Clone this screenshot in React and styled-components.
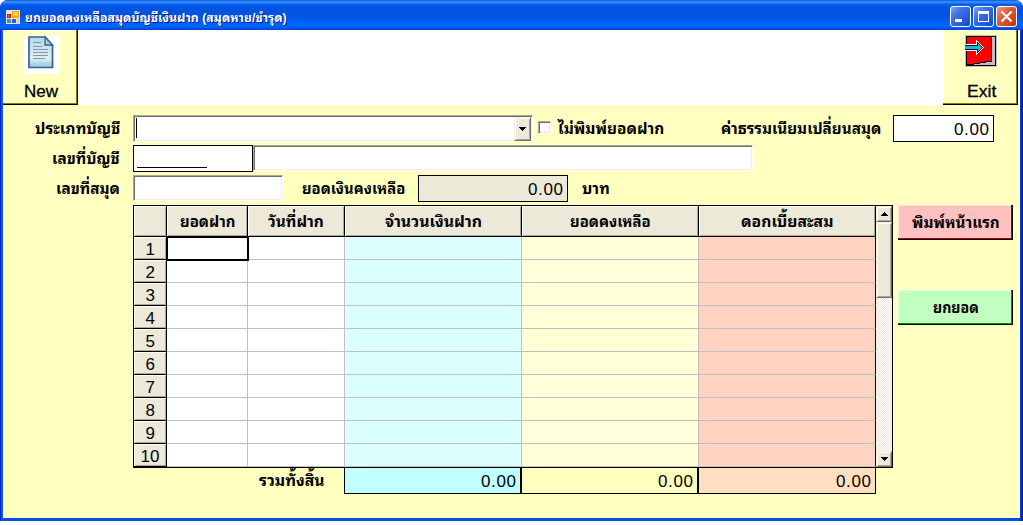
import React, { useLayoutEffect, useRef } from "react";
import styled, { createGlobalStyle } from "styled-components";

const Global = createGlobalStyle`
  *, *::before, *::after { box-sizing: border-box; }
  body {
    margin: 0;
    background: #fff;
    color: #000;
    font-family: "Liberation Sans", "Noto Sans Thai Looped", "Noto Looped Thai", "Loma", "Waree", "Garuda", "Tlwg Typist", "Noto Sans Thai", sans-serif;
    font-size: 16px;
    overflow: hidden;
  }
`;

const Window = styled.div`
  width: 1023px;
  height: 521px;
  display: flex;
  flex-direction: column;
  background: linear-gradient(90deg, #0019cf 0, #0831d9 1px, #166aee 2px, #0855dd 3px, #0855dd 1020px, #0046e0 1020px, #0030c8 1021px, #00138c 1023px);
  border-radius: 8px 8px 0 0;
  overflow: hidden;
`;

const TitleBar = styled.header`
  height: 30px;
  flex: none;
  display: flex;
  align-items: center;
  padding: 3px 6px 0 6px;
  gap: 5px;
  color: #fff;
  background: linear-gradient(180deg, #0a55d8 0, #3d95ff 2px, #0b62ee 4px, #0054e3 7px, #0053e1 15px, #0062fa 23px, #0066ff 26px, #005be8 28px, #003dd0 30px);
`;

const TitleText = styled.div`
  flex: 1;
  text-shadow: 1px 1px 0 #0a1883;
`;

const CaptionButtons = styled.div`
  display: flex;
  gap: 2px;
`;

const CaptionButton = styled.div`
  width: 21px;
  height: 21px;
  border: 1px solid #fff;
  border-radius: 3px;
  background: ${(p) =>
    p.$close
      ? "linear-gradient(135deg, #f0a088 0, #e4613c 35%, #d8411b 75%, #b8320f 100%)"
      : "linear-gradient(135deg, #7fa6f4 0, #3c6fe8 35%, #2458dd 75%, #1a45bd 100%)"};
  svg { display: block; }
`;

const Client = styled.main`
  flex: 1;
  margin: 0 3px 3px 3px;
  background: #ffffc0;
  box-shadow: 0 1px 0 #0046f0;
`;

const Toolbar = styled.div`
  height: 75px;
  width: 1017px;
  display: flex;
  justify-content: space-between;
  background: #fff;
  padding-right: 2px;
`;

const ToolButton = styled.div`
  width: 75px;
  height: 75px;
  display: flex;
  flex-direction: column;
  align-items: center;
  padding: 5px 0 0 2px;
  background: #ffffc0;
  border-right: 1px solid #000;
  border-bottom: 1px solid #000;
  box-shadow: inset -1px -1px 0 #808000, inset 1px 1px 0 #ffffe0;
  -webkit-text-stroke: 0.3px #000;
`;

const ToolIcon = styled.div`
  height: 45px;
  display: flex;
  align-items: flex-start;
`;

const Form = styled.section`
  padding-top: 10px;
  display: flex;
  flex-direction: column;
  gap: 3px;
`;

const FormRow = styled.div`
  height: 27px;
  display: flex;
`;

const Label = styled.label`
  width: ${(p) => p.$w}px;
  height: 27px;
  flex: none;
  display: flex;
  align-items: center;
  justify-content: ${(p) => (p.$left ? "flex-start" : "flex-end")};
  padding: 0 ${(p) => p.$pr || 0}px 0 ${(p) => p.$pl || 0}px;
`;

const Sunken = styled.div`
  width: ${(p) => p.$w}px;
  height: ${(p) => p.$h || 27}px;
  flex: none;
  display: flex;
  background: #fff;
  border: 1px solid;
  border-color: #aca899 #fff #fff #aca899;
  box-shadow: inset 1px 1px 0 #716f64, inset -1px -1px 0 #f1efe2;
`;

const Caret = styled.div`
  width: 1px;
  height: 20px;
  margin: 2px auto 0 2px;
  background: #000;
`;

const raised = `
  background: #ece9d8;
  border: 1px solid;
  border-color: #f1efe2 #716f64 #716f64 #f1efe2;
  box-shadow: inset 1px 1px 0 #fff, inset -1px -1px 0 #aca899;
`;

const DropButton = styled.div`
  ${raised}
  width: 17px;
  height: 24px;
  margin: 1px 1px 0 0;
  display: flex;
  align-items: center;
  justify-content: center;
`;

const Boxed = styled.div`
  width: ${(p) => p.$w}px;
  height: 27px;
  flex: none;
  display: flex;
  align-items: center;
  justify-content: flex-end;
  padding: 2px 3px 0 3px;
  border: 1px solid #000;
  background: ${(p) => p.$bg || "#fff"};
`;

const MaskLine = styled.div`
  width: 70px;
  height: 1px;
  background: #000;
  margin: 16px auto 0 0;
`;

const CheckBox = styled.div`
  width: 13px;
  height: 13px;
  margin: 6px 0 0 5px;
  background: #fff;
  border: 1px solid;
  border-color: #aca899 #fff #fff #aca899;
  box-shadow: inset 1px 1px 0 #716f64, inset -1px -1px 0 #ece9d8;
`;

const Lower = styled.section`
  display: flex;
  padding: 3px 0 0 130px;
`;

const GridFrame = styled.div`
  width: 760px;
  height: 263px;
  display: flex;
  border: 1px solid #000;
`;

const Sheet = styled.div`
  width: 742px;
  height: 261px;
  flex: none;
  display: grid;
  grid-template-columns: 33px 81px 97px 177px 177px 177px;
  grid-template-rows: 31px repeat(10, 23px);
`;

const HeadCell = styled.div`
  display: flex;
  align-items: center;
  justify-content: center;
  padding-top: ${(p) => (p.$row ? 3 : 2)}px;
  background: #ece9d8;
  border-right: 1px solid #000;
  border-bottom: 1px solid #000;
  box-shadow: inset 1px 1px 0 #fff, inset -1px -1px 0 #aca899;
`;

const Cell = styled.div`
  background: ${(p) => p.$bg};
  border-right: 1px solid ${(p) => (p.$last ? "#000" : "#c0c0c0")};
  border-bottom: 1px solid #c0c0c0;
  ${(p) => p.$active && "outline: 2px solid #000; outline-offset: -1px; border-color: #000; z-index: 1;"}
`;

const ScrollBar = styled.div`
  width: 16px;
  display: flex;
  flex-direction: column;
  background: repeating-conic-gradient(#ece9d8 0 25%, #fff 0 50%) 0 0 / 2px 2px;
`;

const ScrollPart = styled.div`
  ${raised}
  height: ${(p) => p.$h}px;
  flex: none;
  margin-top: ${(p) => (p.$end ? "auto" : 0)};
  display: flex;
  align-items: center;
  justify-content: center;
`;

const Actions = styled.div`
  display: flex;
  flex-direction: column;
  gap: 50px;
  margin-left: 5px;
`;

const ActionButton = styled.div`
  width: 115px;
  height: 35px;
  display: flex;
  align-items: center;
  justify-content: center;
  padding: 2px 0 0 2px;
  background: ${(p) => p.$bg};
  border-right: 1px solid #000;
  border-bottom: 1px solid #000;
  box-shadow: inset -1px -1px 0 ${(p) => p.$dark}, inset 1px 1px 0 ${(p) => p.$light};
`;

const Totals = styled.section`
  height: 27px;
  margin-top: -1px;
  display: flex;
`;

const Fitted = styled.span`
  width: ${(p) => p.$w}px;
  display: block;
  flex: none;
  line-height: 24px;
  height: 24px;
  white-space: nowrap;
  span {
    display: inline-block;
    transform-origin: 0 50%;
    font-size: ${(p) => p.$size || 16}px;
    font-weight: ${(p) => (p.$bold ? 700 : 400)};
    letter-spacing: ${(p) => p.$ls || 0}px;
  }
`;

function Text({ w, size, bold, ls, children }) {
  const ref = useRef(null);
  useLayoutEffect(() => {
    const el = ref.current;
    el.style.transform = `scaleX(${w / el.offsetWidth})`;
  }, [w, children]);
  return (
    <Fitted $w={w} $size={size} $bold={bold} $ls={ls}>
      <span ref={ref}>{children}</span>
    </Fitted>
  );
}

const Amount = () => <Text w={36} size={17} ls={0.6}>0.00</Text>;

const Arrow = ({ up }) => (
  <svg width="7" height="4" shapeRendering="crispEdges">
    <path d={up ? "M3 0h1v1h1v1h1v1h1v1H0V3h1V2h1V1h1z" : "M0 0h7v1H6v1H5v1H4v1H3V3H2V2H1V1H0z"} />
  </svg>
);

const FormIcon = () => (
  <svg width="14" height="14" shapeRendering="crispEdges">
    <rect width="14" height="14" fill="#e8e4d8" />
    <rect x="1" y="4" width="4" height="4" fill="#c8200c" />
    <rect x="2" y="5" width="2" height="2" fill="#e05040" />
    <rect x="6" y="1" width="7" height="7" fill="#f0a810" />
    <rect x="7" y="2" width="5" height="4" fill="#ffd050" />
    <rect x="1" y="9" width="4" height="4" fill="#5088d8" />
    <rect x="6" y="9" width="4" height="4" fill="#2860c8" />
    <rect x="11" y="9" width="2" height="4" fill="#c8c8c8" />
  </svg>
);

const NewIcon = () => (
  <svg width="37" height="39">
    <defs>
      <linearGradient id="paper" x1="0" y1="0" x2="0" y2="1">
        <stop offset="0" stopColor="#b4d8ea" />
        <stop offset=".7" stopColor="#dceff8" />
        <stop offset="1" stopColor="#8fc3e2" />
      </linearGradient>
    </defs>
    <rect width="37" height="39" fill="#fff" />
    <path d="M6 2h16l7.500 8v22.500H6z" fill="url(#paper)" stroke="#3a6484" strokeWidth="1.700" />
    <path d="M22 2v8h7.500z" fill="#9bd0ea" stroke="#3a6484" strokeWidth="1.300" />
    <path d="M10 7.500h8M10 11.500h9M10 14.500h15M10 17.500h15M10 20.500h15M10 23.500h12" stroke="#8398a8" />
  </svg>
);

const ExitIcon = () => (
  <svg width="32" height="32" shapeRendering="crispEdges">
    <rect width="32" height="32" fill="#c0c0c0" />
    <path d="M1 1h30v30H1z" />
    <path d="M27 2h3v28H9v-1h6v-1h6v-1h6z" fill="#c0c0c0" />
    <path d="M2 2h24v24h-6v1h-6v1H8v1H2z" fill="#f00" />
    <path d="M0 9h11V5h1v1h1v1h1v1h1v1h1v1h1v1h1v1h1v1h-1v1h-1v1h-1v1h-1v1h-1v1h-1v1h-1v1h-1v-4H0z" fill="#ffffc0" />
    <path d="M0 10h12V7h1v1h1v1h1v1h1v1h1v1h1v1h-1v1h-1v1h-1v1h-1v1h-1v1h-1v-3H0z" fill="#0000a0" />
    <path d="M0 11h13V9h1v1h1v1h1v1h1v1h-1v1h-1v1h-1v1h-1v-2H0z" fill="#20b8b8" />
  </svg>
);

const columns = [
  { title: "ยอดฝาก", w: 55, bg: "#fff" },
  { title: "วันที่ฝาก", w: 56, bg: "#fff" },
  { title: "จำนวนเงินฝาก", w: 97, bg: "#dcffff" },
  { title: "ยอดคงเหลือ", w: 81, bg: "#ffffd8" },
  { title: "ดอกเบี้ยสะสม", w: 92, bg: "#ffd3bf" },
];
const rows = [1, 2, 3, 4, 5, 6, 7, 8, 9, 10];

export default function App() {
  return (
    <>
      <Global />
      <Window>
        <TitleBar>
          <FormIcon />
          <TitleText><Text w={262} size={12} bold>ยกยอดคงเหลือสมุดบัญชีเงินฝาก (สมุดหาย/ชำรุด)</Text></TitleText>
          <CaptionButtons>
            <CaptionButton><svg width="19" height="19"><path d="M4 12h7v3H4z" fill="#fff" /></svg></CaptionButton>
            <CaptionButton><svg width="19" height="19"><path d="M4 4h11v11H4zM5 7v7h9V7z" fill="#fff" fillRule="evenodd" /></svg></CaptionButton>
            <CaptionButton $close><svg width="19" height="19"><path d="M4.500 4.500l10 10M14.500 4.500l-10 10" stroke="#fff" strokeWidth="2.200" /></svg></CaptionButton>
          </CaptionButtons>
        </TitleBar>
        <Client>
          <Toolbar>
            <ToolButton><ToolIcon><NewIcon /></ToolIcon><Text w={34} size={17}>New</Text></ToolButton>
            <ToolButton><ToolIcon><ExitIcon /></ToolIcon><Text w={29} size={17}>Exit</Text></ToolButton>
          </Toolbar>
          <Form>
            <FormRow>
              <Label $w={130} $pr={13}><Text w={85} bold>ประเภทบัญชี</Text></Label>
              <Sunken $w={400}><Caret /><DropButton><Arrow /></DropButton></Sunken>
              <CheckBox />
              <Label $w={330} $left $pl={7}><Text w={106} bold>ไม่พิมพ์ยอดฝาก</Text></Label>
              <Label $w={0} $pr={0}><Text w={160} bold>ค่าธรรมเนียมเปลี่ยนสมุด</Text></Label>
              <Label $w={12} />
              <Boxed $w={101}><Amount /></Boxed>
            </FormRow>
            <FormRow>
              <Label $w={130} $pr={13}><Text w={68} bold>เลขที่บัญชี</Text></Label>
              <Boxed $w={120}><MaskLine /></Boxed>
              <Sunken $w={500} $h={26} />
            </FormRow>
            <FormRow>
              <Label $w={130} $pr={13}><Text w={64} bold>เลขที่สมุด</Text></Label>
              <Sunken $w={150} $h={26} />
              <Label $w={135} $left $pl={19}><Text w={103} bold>ยอดเงินคงเหลือ</Text></Label>
              <Boxed $w={150} $bg="#ece9d8"><Amount /></Boxed>
              <Label $w={60} $left $pl={14}><Text w={28} bold>บาท</Text></Label>
            </FormRow>
          </Form>
          <Lower>
            <GridFrame>
              <Sheet>
                <HeadCell />
                {columns.map((c) => (
                  <HeadCell key={c.title}><Text w={c.w} bold>{c.title}</Text></HeadCell>
                ))}
                {rows.map((r) => (
                  <React.Fragment key={r}>
                    <HeadCell $row><Text w={r > 9 ? 19 : 9} size={17}>{r}</Text></HeadCell>
                    {columns.map((c, i) => (
                      <Cell key={c.title} $bg={c.bg} $last={i === 4} $active={r === 1 && i === 0} />
                    ))}
                  </React.Fragment>
                ))}
              </Sheet>
              <ScrollBar>
                <ScrollPart $h={16}><Arrow up /></ScrollPart>
                <ScrollPart $h={76} />
                <ScrollPart $h={16} $end><Arrow /></ScrollPart>
              </ScrollBar>
            </GridFrame>
            <Actions>
              <ActionButton $bg="#ffc0c0" $dark="#a00000" $light="#ffe0e0"><Text w={88} bold>พิมพ์หน้าแรก</Text></ActionButton>
              <ActionButton $bg="#c0ffc0" $dark="#009000" $light="#e0ffe0"><Text w={46} bold>ยกยอด</Text></ActionButton>
            </Actions>
          </Lower>
          <Totals>
            <Label $w={341} $pr={19}><Text w={66} bold>รวมทั้งสิ้น</Text></Label>
            <Boxed $w={177} $bg="#c0ffff"><Amount /></Boxed>
            <Boxed $w={177} $bg="#ffffc0"><Amount /></Boxed>
            <Boxed $w={178} $bg="#ffdfc0"><Amount /></Boxed>
          </Totals>
        </Client>
      </Window>
    </>
  );
}
